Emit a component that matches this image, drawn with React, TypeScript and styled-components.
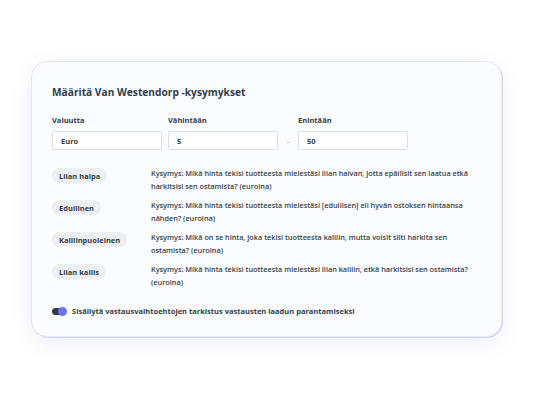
import React from 'react';
import styled, { createGlobalStyle } from 'styled-components';

const GlobalStyle = createGlobalStyle`
    body {
        margin: 0;
        background: #ffffff;
        font-family: 'Open Sans', 'Noto Sans', sans-serif;
        color: #333e48;
    }
`;

const Page = styled.div`
    width: 533px;
    height: 400px;
    padding: 61px 0 0 31px;
    box-sizing: border-box;
`;

const Card = styled.div`
    width: 471px;
    height: 276px;
    box-sizing: border-box;
    padding: 23px 20px 0 20px;
    border-radius: 16px;
    background: #fbfcff;
    border: 1px solid #e6e8fb;
    box-shadow: 1px 1px 0 #d3d6f8, 0 6px 22px rgba(90, 100, 180, 0.1);
`;

const Title = styled.h2`
    margin: 0 0 16px 0;
    font-size: 10.2px;
    font-weight: 700;
    color: #333e48;
`;

const FieldsRow = styled.div`
    display: flex;
    align-items: flex-end;
`;

const Field = styled.div`
    display: flex;
    flex-direction: column;
    gap: 6px;
`;

const Label = styled.label`
    font-size: 7.5px;
    font-weight: 700;
    color: #333e48;
`;

const Input = styled.div`
    width: 110px;
    height: 19px;
    box-sizing: border-box;
    padding: 0 8px;
    display: flex;
    align-items: center;
    background: #ffffff;
    border: 1px solid #dcdfe3;
    border-radius: 2px;
    font-size: 7.5px;
    font-weight: 700;
    color: #333e48;
`;

const Spacer = styled.div<{ $w: number }>`
    width: ${(p) => p.$w}px;
`;

const Dash = styled.div`
    width: 20px;
    height: 19px;
    display: flex;
    align-items: center;
    justify-content: center;
    font-size: 8px;
    color: #6b7785;
`;

const Questions = styled.div`
    margin-top: 17px;
    display: flex;
    flex-direction: column;
    gap: 6px;
`;

const QuestionRow = styled.div`
    display: grid;
    grid-template-columns: 99px 1fr;
    align-items: start;
    min-height: 26px;
`;

const Pill = styled.span`
    justify-self: start;
    display: inline-flex;
    align-items: center;
    height: 15px;
    padding: 0 7px;
    margin-top: 1px;
    border-radius: 8px;
    background: #eeeff1;
    font-size: 7.5px;
    font-weight: 700;
    color: #333e48;
`;

const QuestionText = styled.p`
    margin: 0;
    font-size: 7.3px;
    line-height: 13px;
    font-weight: 600;
    color: #333e48;
    padding-right: 8px;
`;

const ToggleRow = styled.div`
    margin-top: 17px;
    display: flex;
    align-items: center;
    gap: 6px;
`;

const Toggle = styled.div`
    position: relative;
    width: 14px;
    height: 7px;
    border-radius: 4px;
    background: #2e3a4a;
`;

const Knob = styled.span`
    position: absolute;
    right: -1px;
    top: -1px;
    width: 9px;
    height: 9px;
    border-radius: 50%;
    background: #6b74ea;
`;

const ToggleLabel = styled.span`
    font-size: 7.5px;
    font-weight: 700;
    color: #333e48;
`;

const questions = [
    {
        tag: 'Liian halpa',
        text: 'Kysymys: Mikä hinta tekisi tuotteesta mielestäsi liian halvan, jotta epäilisit sen laatua etkä harkitsisi sen ostamista? (euroina)',
    },
    {
        tag: 'Edullinen',
        text: 'Kysymys: Mikä hinta tekisi tuotteesta mielestäsi [edullisen] eli hyvän ostoksen hintaansa nähden? (euroina)',
    },
    {
        tag: 'Kalliinpuoleinen',
        text: 'Kysymys: Mikä on se hinta, joka tekisi tuotteesta kalliin, mutta voisit silti harkita sen ostamista? (euroina)',
    },
    {
        tag: 'Liian kallis',
        text: 'Kysymys: Mikä hinta tekisi tuotteesta mielestäsi liian kalliin, etkä harkitsisi sen ostamista? (euroina)',
    },
];

const App: React.FC = () => {
    return (
        <Page>
            <GlobalStyle />
            <Card>
                <Title>Määritä Van Westendorp -kysymykset</Title>

                {/* valuutta ja hintaväli */}
                <FieldsRow>
                    <Field>
                        <Label>Valuutta</Label>
                        <Input>Euro</Input>
                    </Field>
                    <Spacer $w={6} />
                    <Field>
                        <Label>Vähintään</Label>
                        <Input>5</Input>
                    </Field>
                    <Dash>-</Dash>
                    <Field>
                        <Label>Enintään</Label>
                        <Input>50</Input>
                    </Field>
                </FieldsRow>

                <Questions>
                    {questions.map((q) => (
                        <QuestionRow key={q.tag}>
                            <Pill>{q.tag}</Pill>
                            <QuestionText>{q.text}</QuestionText>
                        </QuestionRow>
                    ))}
                </Questions>

                <ToggleRow>
                    <Toggle>
                        <Knob />
                    </Toggle>
                    <ToggleLabel>Sisällytä vastausvaihtoehtojen tarkistus vastausten laadun parantamiseksi</ToggleLabel>
                </ToggleRow>
            </Card>
        </Page>
    );
};

export default App;
